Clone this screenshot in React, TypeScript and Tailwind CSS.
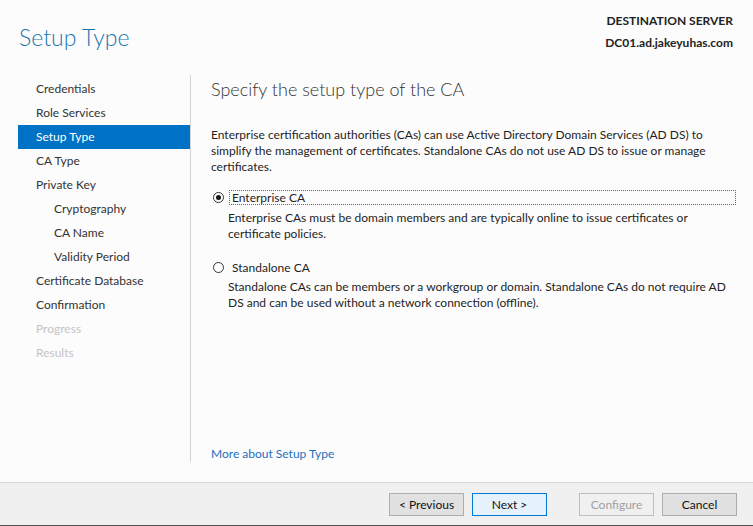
const steps = [
  { label: 'Credentials', indent: false, state: 'done' },
  { label: 'Role Services', indent: false, state: 'done' },
  { label: 'Setup Type', indent: false, state: 'active' },
  { label: 'CA Type', indent: false, state: 'done' },
  { label: 'Private Key', indent: false, state: 'done' },
  { label: 'Cryptography', indent: true, state: 'done' },
  { label: 'CA Name', indent: true, state: 'done' },
  { label: 'Validity Period', indent: true, state: 'done' },
  { label: 'Certificate Database', indent: false, state: 'done' },
  { label: 'Confirmation', indent: false, state: 'done' },
  { label: 'Progress', indent: false, state: 'disabled' },
  { label: 'Results', indent: false, state: 'disabled' },
];

function Radio({ checked }: { checked: boolean }) {
  return (
    <span className="w-[11px] h-[11px] rounded-full border border-[#333] bg-white flex items-center justify-center shrink-0">
      {checked && <span className="w-[5px] h-[5px] rounded-full bg-[#111]" />}
    </span>
  );
}

export default function App() {
  return (
    <div
      className="w-[753px] h-[526px] bg-[#fcfcfc] flex flex-col text-[12px] text-[#1e1e1e] overflow-hidden"
      style={{ fontFamily: 'Lato, "Open Sans", sans-serif' }}
    >
      {/* Header */}
      <div className="flex justify-between h-[75px] shrink-0">
        <h1 className="pl-[19px] pt-[21px] text-[23px] font-light leading-[32px] text-[#1a77ad]">
          Setup Type
        </h1>
        <div className="pr-[20px] pt-[10px] text-right font-bold leading-[22px] text-[#222]">
          <div>DESTINATION SERVER</div>
          <div>DC01.ad.jakeyuhas.com</div>
        </div>
      </div>

      {/* Body */}
      <div className="flex flex-1 min-h-0">
        {/* Steps */}
        <div className="w-[191px] shrink-0 flex pb-[20px]">
          <ul className="w-[172px] ml-[18px] mt-[2px] flex flex-col">
            {steps.map((s, i) => (
              <li
                key={i}
                className={
                  'h-[24px] leading-[24px] ' +
                  (s.indent ? 'pl-[36px] ' : 'pl-[18px] ') +
                  (s.state === 'active'
                    ? 'bg-[#0072c6] text-white'
                    : s.state === 'disabled'
                    ? 'text-[#c4c4c4]'
                    : 'text-[#333]')
                }
              >
                {s.label}
              </li>
            ))}
          </ul>
          <div className="w-px bg-[#d4d4d4] h-full" />
        </div>

        {/* Content */}
        <div className="flex-1 flex flex-col pl-[20px] pr-[17px] pb-[20px]">
          <h2 className="text-[18px] font-light text-[#333] leading-[28px] mt-0">
            Specify the setup type of the CA
          </h2>
          <p className="mt-[24px] leading-[16px] whitespace-nowrap">
            Enterprise certification authorities (CAs) can use Active Directory Domain Services (AD DS) to
            <br />
            simplify the management of certificates. Standalone CAs do not use AD DS to issue or manage
            <br />
            certificates.
          </p>

          <div className="mt-[15px] flex items-center gap-[5px] ml-[2px]">
            <Radio checked />
            <span className="flex-1 h-[15px] border border-dotted border-[#666] leading-[13px] pl-[2px]">
              Enterprise CA
            </span>
          </div>
          <p className="ml-[17px] mt-[5px] leading-[16px] whitespace-nowrap">
            Enterprise CAs must be domain members and are typically online to issue certificates or
            <br />
            certificate policies.
          </p>

          <div className="mt-[18px] flex items-center gap-[5px] ml-[2px]">
            <Radio checked={false} />
            <span className="leading-[15px] pl-[3px]">Standalone CA</span>
          </div>
          <p className="ml-[17px] mt-[4px] leading-[16px] whitespace-nowrap">
            Standalone CAs can be members or a workgroup or domain. Standalone CAs do not require AD
            <br />
            DS and can be used without a network connection (offline).
          </p>

          <div className="mt-auto text-[#1f6fbf] leading-[16px]">More about Setup Type</div>
        </div>
      </div>

      {/* Footer */}
      <div className="h-[44px] shrink-0 bg-[#f0f0f0] border-t border-[#d8d8d8] border-b border-b-[#555] flex items-start justify-end pt-[10px] pr-[16px]">
        <button className="w-[75px] h-[23px] border border-[#adadad] bg-[#e1e1e1] text-[#111]">
          &lt; Previous
        </button>
        <button className="ml-[8px] w-[75px] h-[23px] border border-[#0078d7] bg-[#e5f1fb] text-[#111]">
          Next &gt;
        </button>
        <button className="ml-[32px] w-[75px] h-[23px] border border-[#bfbfbf] bg-[#f0f0f0] text-[#a0a0a0]">
          Configure
        </button>
        <button className="ml-[8px] w-[75px] h-[23px] border border-[#adadad] bg-[#e1e1e1] text-[#111]">
          Cancel
        </button>
      </div>
    </div>
  );
}
